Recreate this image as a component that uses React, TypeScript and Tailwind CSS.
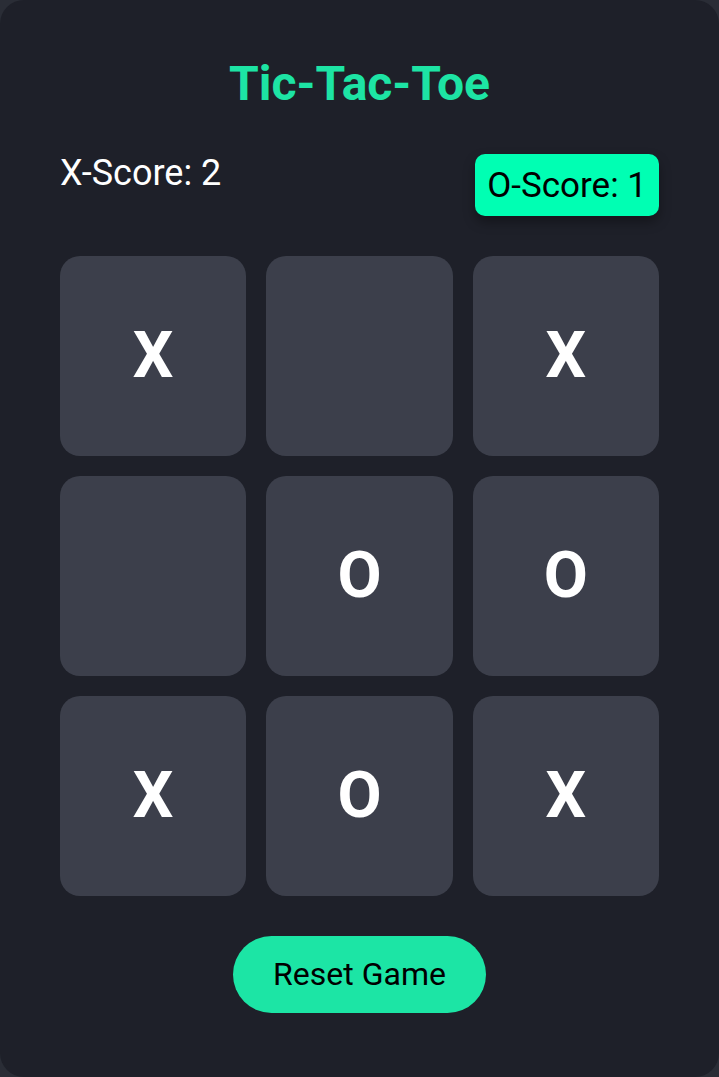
import React, { useState } from 'react';

type Cell = 'X' | 'O' | '';

const initialBoard: Cell[] = ['X', '', 'X', '', 'O', 'O', 'X', 'O', 'X'];

function App() {
  const [board, setBoard] = useState<Cell[]>(initialBoard);
  const [scores] = useState({ x: 2, o: 1 });

  const resetGame = () => setBoard(Array(9).fill('') as Cell[]);

  return (
    <div
      className="min-h-screen w-[719px] bg-[#2a2d36]"
      style={{ fontFamily: 'Roboto, "Liberation Sans", sans-serif' }}
    >
      <div className="flex h-[1077px] flex-col rounded-3xl bg-[#1e2029] px-[60px] pt-[60px]">
        <h1 className="text-center text-[48px] font-bold leading-none text-[#1de4a4]">Tic-Tac-Toe</h1>

        <div className="mt-[46px] flex items-start justify-between">
          <div className="text-[36px] leading-[38px] text-white">X-Score: {scores.x}</div>
          <div className="rounded-[10px] bg-[#00ffb3] px-[12px] py-[10.5px] text-[35px] leading-[41px] text-black shadow-[0_6px_12px_rgba(0,0,0,0.35)]">
            O-Score: {scores.o}
          </div>
        </div>

        <div className="mt-[40px] grid grid-cols-3 gap-5">
          {board.map((cell, i) => (
            <button
              key={i}
              className="flex h-[200px] items-center justify-center rounded-[20px] bg-[#3c3f4b] text-[64px] font-bold leading-none text-white"
            >
              {cell}
            </button>
          ))}
        </div>

        <div className="mt-[40px] flex justify-center">
          <button
            onClick={resetGame}
            className="rounded-full bg-[#1ce5a5] px-[40px] py-[20px] text-[32px] leading-[37px] text-black"
          >
            Reset Game
          </button>
        </div>
      </div>
    </div>
  );
}

export default App;
